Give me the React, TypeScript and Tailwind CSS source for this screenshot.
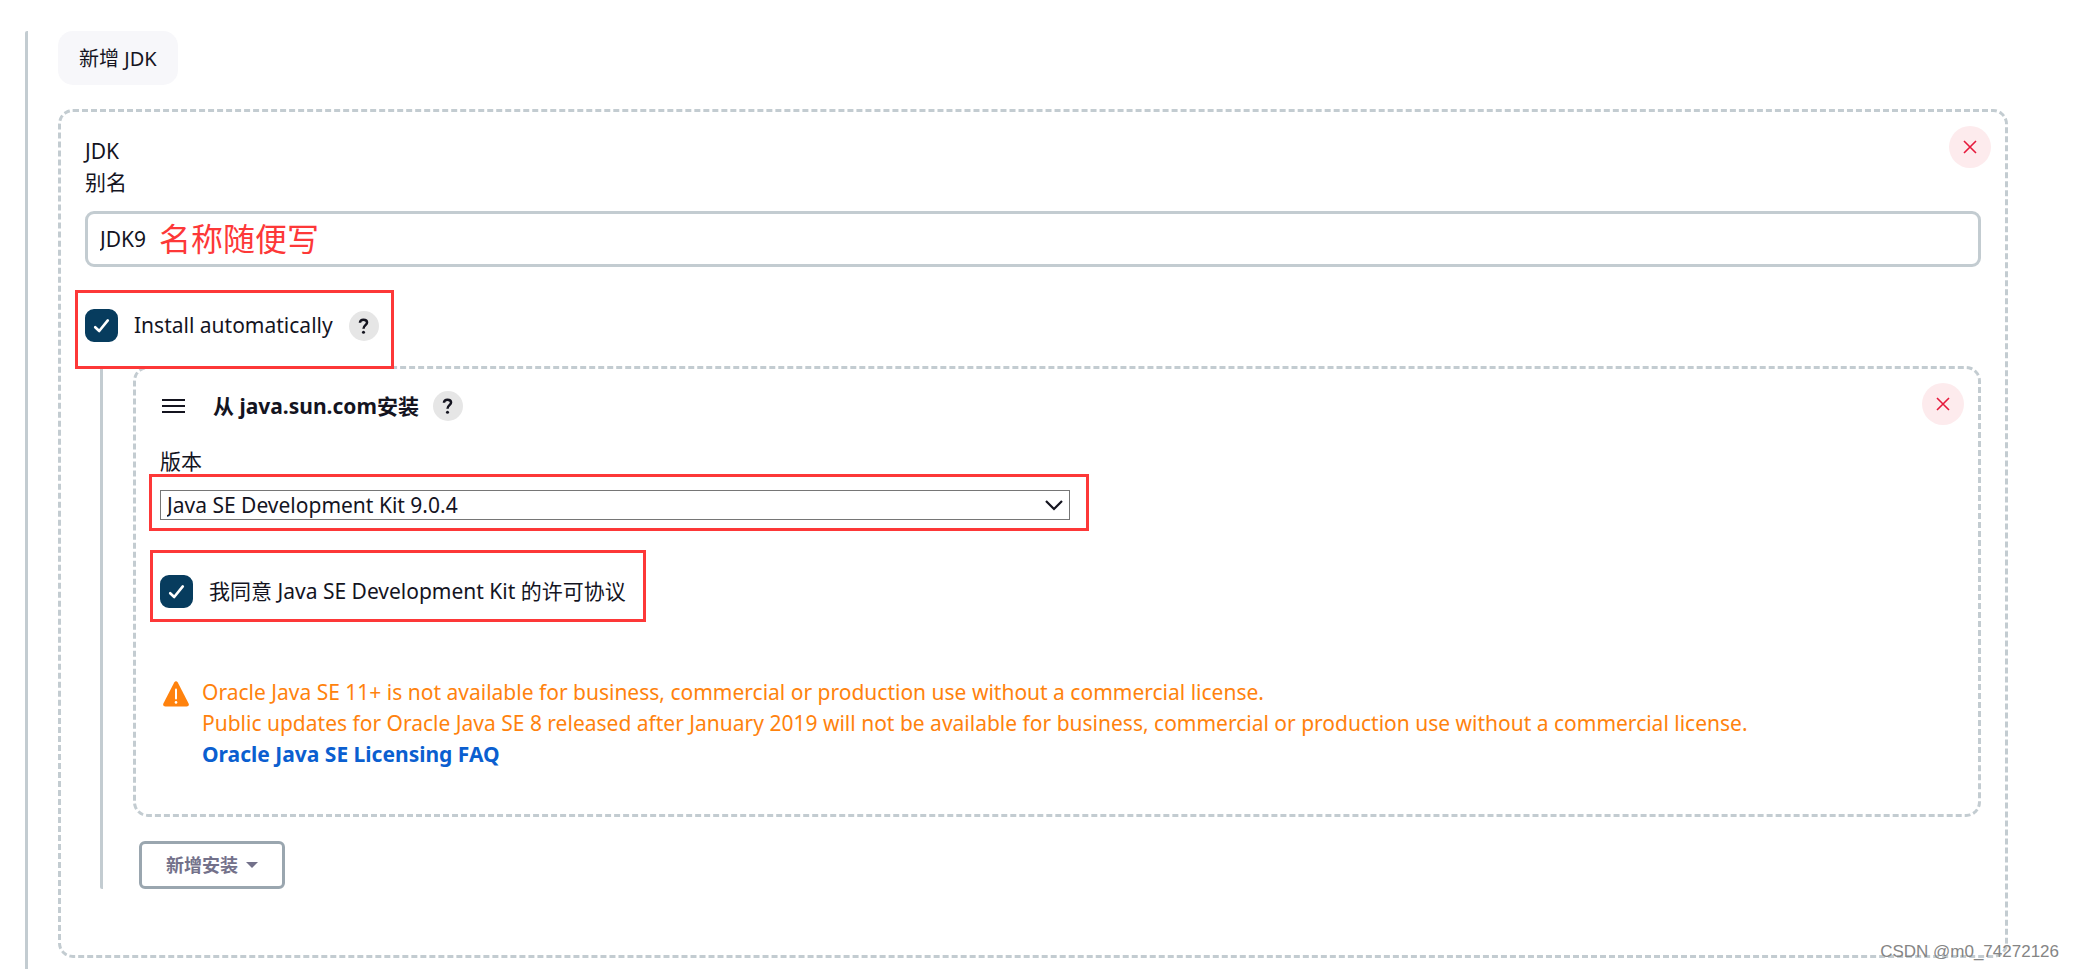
import { useState } from "react";
import type { ReactNode } from "react";

const VERSIONS = [
  "Java SE Development Kit 9.0.4",
  "Java SE Development Kit 9.0.1",
  "Java SE Development Kit 8u221",
];

function DeleteButton({ label }: { label: string }) {
  return (
    <button
      type="button"
      aria-label={label}
      className="absolute top-[14px] right-[14px] flex size-[42px] items-center justify-center rounded-full bg-[#fdebed] text-[#e6193c]"
    >
      <svg viewBox="0 0 14 14" className="size-[14px]" fill="none" stroke="currentColor" strokeWidth="1.6">
        <path d="M1 1l12 12M13 1L1 13" />
      </svg>
    </button>
  );
}

function HelpButton({ label }: { label: string }) {
  return (
    <button
      type="button"
      aria-label={label}
      className="flex size-[30px] shrink-0 items-center justify-center rounded-full bg-[#e6e6e6]"
    >
      <svg viewBox="0 0 12 18" className="h-[16px] w-[11px]" fill="none" stroke="#14141f" strokeWidth="2.8">
        <path d="M2 5.4C2 3 3.6 1.9 5.9 1.9S10 3.1 10 5.1C10 8 6 8.2 6 12" />
        <circle cx="6" cy="16" r="1.7" fill="#14141f" stroke="none" />
      </svg>
    </button>
  );
}

function Checkbox({ id, children }: { id: string; children: ReactNode }) {
  const [checked, setChecked] = useState(true);

  return (
    <div className="flex items-center">
      <span className="relative flex size-[33px] shrink-0">
        <input
          id={id}
          type="checkbox"
          checked={checked}
          onChange={(e) => setChecked(e.target.checked)}
          className="size-full appearance-none rounded-[9px] border-[3px] border-[#c3ccd1] checked:border-[#073c5e] checked:bg-[#073c5e]"
        />
        {checked && (
          <svg
            viewBox="0 0 33 33"
            className="pointer-events-none absolute inset-0"
            fill="none"
            stroke="#fff"
            strokeWidth="2.6"
            strokeLinecap="round"
            strokeLinejoin="round"
          >
            <path d="M10.2 18.2l4 3.8 8.6-10.6" />
          </svg>
        )}
      </span>
      <label htmlFor={id} className="pl-4 whitespace-nowrap">
        {children}
      </label>
    </div>
  );
}

/* Red marker drawn around a control; needs a relative parent */
function Marker({ className }: { className: string }) {
  return <div className={`pointer-events-none absolute z-10 border-[3px] border-[#fd3838] ${className}`} />;
}

function Installer() {
  return (
    <section className="relative rounded-[15px] border-[3px] border-dashed border-[#c3ccd1] px-6 pt-[21px] pb-11">
      <DeleteButton label="删除安装" />
      <div className="flex h-[32px] items-center">
        <svg viewBox="0 0 23 14" className="ml-[2px] h-[14px] w-[23px]" stroke="#14141f" strokeWidth="2">
          <path d="M0 1h23M0 7h23M0 13h23" />
        </svg>
        <h3 className="pr-[14px] pl-7 font-bold">从 java.sun.com安装</h3>
        <HelpButton label="帮助: java.sun.com" />
      </div>

      <label htmlFor="version" className="mt-6 block">
        版本
      </label>
      <div className="relative mt-[13px] max-w-[910px]">
        <select
          id="version"
          className="block h-[30px] w-full appearance-none border border-[#767676] bg-white pl-[6px] leading-[28px]"
        >
          {VERSIONS.map((version) => (
            <option key={version}>{version}</option>
          ))}
        </select>
        <svg
          viewBox="0 0 18 11"
          className="pointer-events-none absolute top-[10px] right-[7px] h-[11px] w-[18px]"
          fill="none"
          stroke="#14141f"
          strokeWidth="2.2"
        >
          <path d="M1 1l8 8 8-8" />
        </svg>
        <Marker className="-top-4 -right-[19px] -bottom-[11px] -left-[11px]" />
      </div>

      <div className="relative mt-[55px] w-fit">
        <Checkbox id="license">我同意 Java SE Development Kit 的许可协议</Checkbox>
        <Marker className="-top-[25px] -right-5 -bottom-[14px] -left-[10px]" />
      </div>

      <div className="mt-[69px] flex text-[#ff820d]">
        <svg viewBox="0 0 26 26" className="mt-1 ml-[3px] size-[26px] shrink-0">
          <path
            d="M11.2 1.6Q13-1 14.8 1.6L25.6 22.4Q26.6 25.4 23.6 25.6H2.4Q-.6 25.4.4 22.4z"
            fill="currentColor"
          />
          <path d="M13 8.5v9" stroke="#fff" strokeWidth="2" strokeLinecap="round" />
          <circle cx="13" cy="21.4" r="1.3" fill="#fff" />
        </svg>
        <div className="pl-[13px]">
          <p>Oracle Java SE 11+ is not available for business, commercial or production use without a commercial license.</p>
          <p>
            Public updates for Oracle Java SE 8 released after January 2019 will not be available for business, commercial
            or production use without a commercial license.
          </p>
          <a href="#faq" className="font-bold text-[#0b5fd0]">
            Oracle Java SE Licensing FAQ
          </a>
        </div>
      </div>
    </section>
  );
}

export default function App() {
  const [name, setName] = useState("JDK9");

  return (
    <main className="relative min-h-screen bg-white pt-[31px] pr-[66px] pl-[25px] font-['Noto_Sans','Noto_Sans_CJK_SC',sans-serif] text-[21px] leading-[31px] text-[#14141f]">
      <div className="rounded-t-[2px] border-l-[3px] border-[#c3ccd1] pb-[11px] pl-[30px]">
        <button type="button" className="h-[54px] rounded-[15px] bg-[#f7f7fa] px-[21px] text-[20px]">
          新增 JDK
        </button>

        <section className="relative mt-6 rounded-[15px] border-[3px] border-dashed border-[#c3ccd1] px-6 pt-6 pb-[66px]">
          <DeleteButton label="删除 JDK" />
          <h2>JDK</h2>
          <label htmlFor="jdk-name" className="block">
            别名
          </label>
          <div className="relative mt-[13px]">
            <input
              id="jdk-name"
              type="text"
              value={name}
              onChange={(e) => setName(e.target.value)}
              className="block h-[56px] w-full rounded-[9px] border-[3px] border-[#c3ccd1] px-3 outline-none"
            />
            <span className="pointer-events-none absolute top-0 bottom-[2px] left-[74px] flex items-center text-[32px] text-[#fd3838]">
              名称随便写
            </span>
          </div>

          <div className="relative mt-[42px] flex w-fit items-center gap-4">
            <Checkbox id="auto-install">Install automatically</Checkbox>
            <HelpButton label="帮助: Install automatically" />
            <Marker className="-top-[19px] -right-[15px] -bottom-[27px] -left-[10px]" />
          </div>

          <div className="mt-6 ml-[15px] rounded-b-[2px] border-l-[3px] border-[#c3ccd1] pl-[30px]">
            <Installer />
            <button
              type="button"
              className="mt-6 ml-[6px] flex h-[48px] items-center gap-2 rounded-[6px] border-[3px] border-[#9aa6af] px-6 text-[18px] font-bold text-[#73718a]"
            >
              新增安装
              <svg viewBox="0 0 12 6" className="h-[6px] w-[12px]" fill="currentColor">
                <path d="M0 0h12L6 6z" />
              </svg>
            </button>
          </div>
        </section>
      </div>

      <span className="absolute right-[15px] bottom-[2px] font-['Liberation_Sans',sans-serif] text-[17px] text-[#858585]">
        CSDN @m0_74272126
      </span>
    </main>
  );
}
